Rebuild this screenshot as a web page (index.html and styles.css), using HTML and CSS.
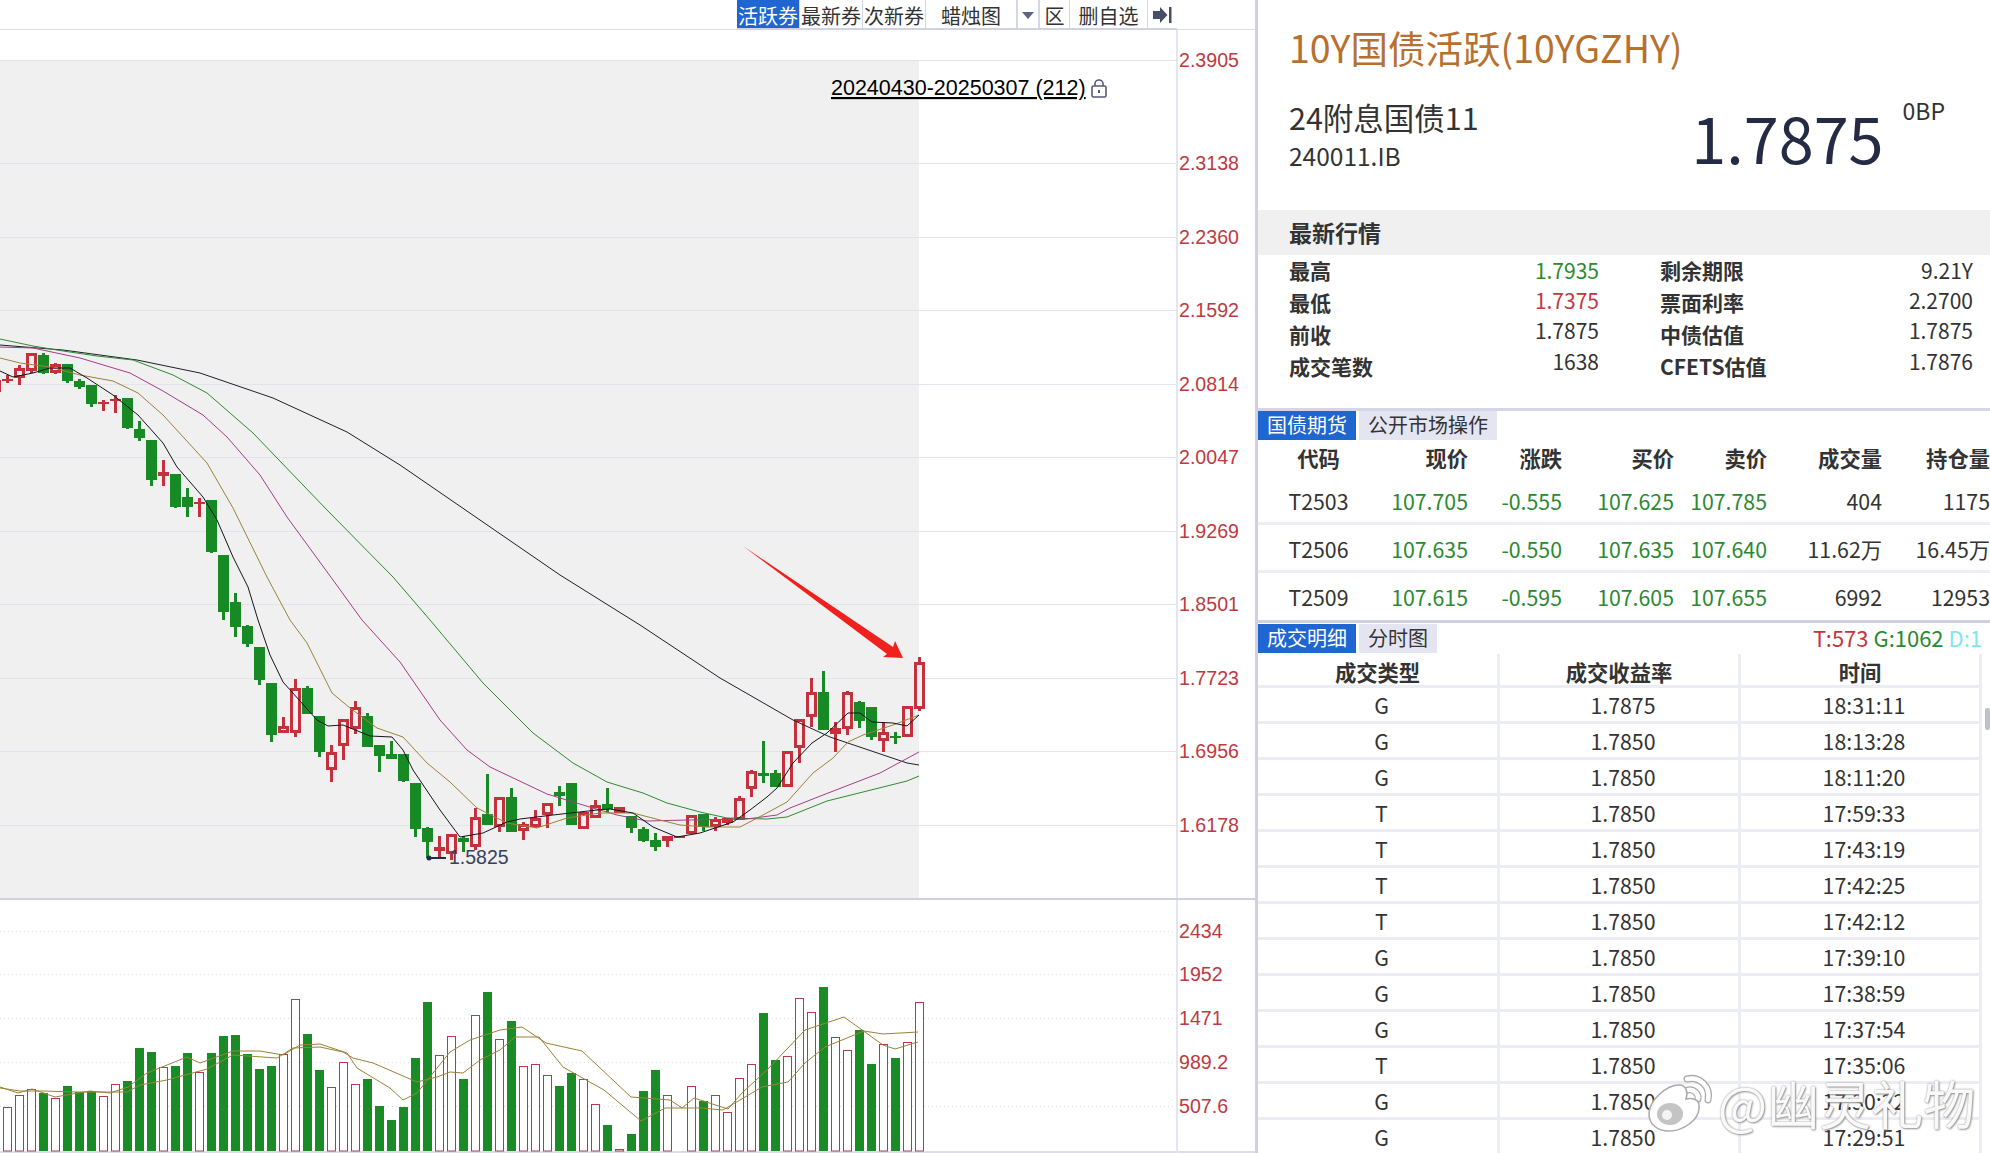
FILE: index.html

```html
<!DOCTYPE html>
<html lang="zh-CN">
<head>
  <meta charset="UTF-8" />
  <title>10Y国债活跃(10YGZHY)</title>
  <link rel="stylesheet" href="styles.css">
</head>
<body>
  <div class="page">
    <div class="left">
      <div class="topbar">
        <div class="tools">
          <a class="tool active" href="#">活跃券</a>
          <a class="tool" href="#">最新券</a>
          <a class="tool" href="#">次新券</a>
          <a class="tool wide" href="#">蜡烛图</a>
          <a class="tool small" href="#"><span class="caret"></span></a>
          <a class="tool mid" href="#">区</a>
          <a class="tool del" href="#">删自选</a>
          <a class="tool mid" href="#">
            <svg width="19" height="16" viewBox="0 0 19 16"><path d="M0 4h7V0l7.500 8L7 16v-4H0zM16 0h2.500v16H16z" fill="#4a4d6a"/></svg>
          </a>
        </div>
      </div>
      <svg id="kline" class="kline" viewBox="0 30 1255 868" width="1255" height="868"></svg>
      <svg id="volume" class="volume" viewBox="0 898 1255 255" width="1255" height="255"></svg>
    </div>

    <div class="right">
      <div class="head">
        <div class="title">10Y国债活跃(10YGZHY)</div>
        <div class="bond">
          <div>
            <div class="bond-name">24附息国债11</div>
            <div class="bond-code">240011.IB</div>
          </div>
          <div class="price-wrap">
            <div class="price">1.7875</div>
            <div class="bp">0BP</div>
          </div>
        </div>
      </div>

      <div class="band">最新行情</div>
      <div class="quote">
        <div class="quote-col">
          <div class="labels">
            <div>最高</div>
            <div>最低</div>
            <div>前收</div>
            <div>成交笔数</div>
          </div>
          <div class="values">
            <div class="green">1.7935</div>
            <div class="red">1.7375</div>
            <div>1.7875</div>
            <div>1638</div>
          </div>
        </div>
        <div class="quote-col second">
          <div class="labels">
            <div>剩余期限</div>
            <div>票面利率</div>
            <div>中债估值</div>
            <div>CFETS估值</div>
          </div>
          <div class="values">
            <div>9.21Y</div>
            <div>2.2700</div>
            <div>1.7875</div>
            <div>1.7876</div>
          </div>
        </div>
      </div>

      <div class="tabs">
        <a class="tab active" href="#">国债期货</a>
        <a class="tab" href="#">公开市场操作</a>
      </div>
      <div class="fut-head">
        <div class="center">代码</div><div>现价</div><div>涨跌</div><div>买价</div><div>卖价</div><div>成交量</div><div>持仓量</div>
      </div>
      <div class="fut-row">
        <div class="center">T2503</div><div class="green">107.705</div><div class="green">-0.555</div><div class="green">107.625</div><div class="green">107.785</div><div>404</div><div>1175</div>
      </div>
      <div class="fut-row">
        <div class="center">T2506</div><div class="green">107.635</div><div class="green">-0.550</div><div class="green">107.635</div><div class="green">107.640</div><div>11.62万</div><div>16.45万</div>
      </div>
      <div class="fut-row last">
        <div class="center">T2509</div><div class="green">107.615</div><div class="green">-0.595</div><div class="green">107.605</div><div class="green">107.655</div><div>6992</div><div>12953</div>
      </div>

      <div class="tabs second-tabs">
        <a class="tab active" href="#">成交明细</a>
        <a class="tab" href="#">分时图</a>
        <div class="counts"><span class="red">T:573</span> <span class="green">G:1062</span> <span class="cyan">D:1</span></div>
      </div>
      <div class="trades">
        <div class="trade-head"><div>成交类型</div><div>成交收益率</div><div>时间</div></div>
        <div class="trade-row"><div>G</div><div>1.7875</div><div>18:31:11</div></div>
        <div class="trade-row"><div>G</div><div>1.7850</div><div>18:13:28</div></div>
        <div class="trade-row"><div>G</div><div>1.7850</div><div>18:11:20</div></div>
        <div class="trade-row"><div>T</div><div>1.7850</div><div>17:59:33</div></div>
        <div class="trade-row"><div>T</div><div>1.7850</div><div>17:43:19</div></div>
        <div class="trade-row"><div>T</div><div>1.7850</div><div>17:42:25</div></div>
        <div class="trade-row"><div>T</div><div>1.7850</div><div>17:42:12</div></div>
        <div class="trade-row"><div>G</div><div>1.7850</div><div>17:39:10</div></div>
        <div class="trade-row"><div>G</div><div>1.7850</div><div>17:38:59</div></div>
        <div class="trade-row"><div>G</div><div>1.7850</div><div>17:37:54</div></div>
        <div class="trade-row"><div>T</div><div>1.7850</div><div>17:35:06</div></div>
        <div class="trade-row"><div>G</div><div>1.7850</div><div>17:30:22</div></div>
        <div class="trade-row"><div>G</div><div>1.7850</div><div>17:29:51</div></div>
        <div class="scroll-thumb"></div>
      </div>
    </div>
  </div>

  <div class="watermark">
    <svg width="70" height="62" viewBox="0 0 70 62">
      <g fill="none" stroke="#a9a9a9" stroke-width="7" stroke-linecap="round">
        <path d="M42 7C54 4 66 14 63 28"/>
        <path d="M43 18C49 17 54 22 53 27"/>
      </g>
      <g fill="none" stroke="#fff" stroke-width="4.500" stroke-linecap="round">
        <path d="M42 7C54 4 66 14 63 28"/>
        <path d="M43 18C49 17 54 22 53 27"/>
      </g>
      <path d="M4 42C4 28 22 13 34 13C42 13 43 21 41 27C50 25 55 29 54 36C54 48 38 59 24 59C12 59 4 52 4 42Z" fill="#fff" fill-opacity=".95" stroke="#a9a9a9" stroke-width="1.500"/>
      <ellipse cx="25" cy="42" rx="13" ry="11" fill="#c4c4c4"/>
      <circle cx="22" cy="43" r="5" fill="#f4f4f4"/>
    </svg>
    <span class="wm-text">@幽灵礼物</span>
  </div>

  <script src="chart.js"></script>
</body>
</html>
```

FILE: styles.css

```css
html, body {
  margin: 0;
  padding: 0;
  height: 100%;
  overflow: hidden;
  background: #ffffff;
}
body {
  font-family: "Noto Sans CJK SC", sans-serif;
  color: #333333;
  font-size: 20px;
}
a {
  text-decoration: none;
  color: inherit;
}
.page {
  display: flex;
  width: 1990px;
  height: 1153px;
}
.left {
  width: 1255px;
  flex: none;
  border-right: 3px solid #cfd1e3;
}
.right {
  flex: 1;
  min-width: 0;
  position: relative;
  overflow: hidden;
}
.topbar {
  height: 29px;
  border-bottom: 1px solid #dcdde9;
  display: flex;
  justify-content: flex-end;
  padding-right: 78px;
}
.tools {
  display: flex;
  height: 28px;
  border-bottom: 2px solid #d0d2e4;
}
.tool {
  width: 62px;
  height: 26px;
  padding-top: 2px;
  text-align: center;
  white-space: nowrap;
  border-right: 1px solid #d6d7e6;
  display: flex;
  align-items: center;
  justify-content: center;
}
.tool.active {
  background: #1f66d0;
  color: #ffffff;
}
.tool.wide { width: 90px; border-right: 2px solid #d6d7e6; }
.tool.small { width: 20px; border-right: 2px solid #d6d7e6; }
.tool.mid { width: 29px; border-right: 1px solid #d6d7e6; }
.tool.del { width: 77px; }
.tool:last-child { border-right: none; }
.caret {
  width: 0;
  height: 0;
  border-left: 6px solid transparent;
  border-right: 6px solid transparent;
  border-top: 7px solid #5f6280;
}
.kline, .volume {
  display: block;
}
.axis, .low, .range {
  font-family: "Liberation Sans", Arial, sans-serif;
}
.axis {
  font-size: 19.6px;
  fill: #c0393f;
}
.low {
  font-size: 19.5px;
  fill: #3a3f5c;
}
.range {
  font-size: 21.5px;
  fill: #000000;
  text-decoration: underline;
  text-decoration-thickness: 2px;
}
.title {
  padding-top: 25px;
  padding-left: 31px;
  line-height: 44px;
  font-size: 37.5px;
  color: #b8702e;
  white-space: nowrap;
}
.head {
  height: 210px;
}
.bond {
  display: flex;
  justify-content: space-between;
  padding-left: 31px;
  padding-right: 45px;
  margin-top: 28px;
}
.bond-name {
  font-size: 30.5px;
  line-height: 40px;
}
.bond-code {
  font-size: 24.5px;
  line-height: 37px;
}
.price-wrap {
  display: flex;
  align-items: flex-start;
}
.price {
  font-size: 63px;
  line-height: 70px;
  margin-top: 5px;
  color: #252b45;
}
.bp {
  font-size: 23px;
  line-height: 30px;
  margin-top: -2px;
  margin-left: 19px;
}
.band {
  height: 45px;
  line-height: 45px;
  background: #f0f0f0;
  padding-left: 31px;
  font-size: 23px;
  font-weight: 700;
}
.quote {
  display: flex;
  padding-left: 31px;
  box-sizing: border-box;
  border-bottom: 3px solid #d4d5e6;
  height: 156px;
}
.quote-col {
  display: flex;
  justify-content: space-between;
  width: 310px;
}
.quote-col.second {
  margin-left: 61px;
  width: 313px;
}
.labels {
  font-weight: 700;
  font-size: 21px;
  line-height: 31.9px;
  white-space: nowrap;
}
.values {
  text-align: right;
  font-size: 21px;
  line-height: 30.2px;
}
.green { color: #2a8a2e; }
.red { color: #c8343c; }
.cyan { color: #7ee8ea; }
.tabs {
  display: flex;
  gap: 3px;
  height: 29px;
  font-size: 20px;
}
.second-tabs {
  border-top: 3px solid #cfd1e3;
  padding-top: 1px;
}
.tab {
  height: 29px;
  line-height: 27px;
  padding: 0 9px;
  background: #e4e5f1;
  white-space: nowrap;
}
.tab.active {
  background: #1f66d0;
  color: #ffffff;
}
.counts {
  margin-left: auto;
  padding-right: 8px;
  line-height: 26px;
  font-size: 22px;
  white-space: nowrap;
}
.fut-head, .fut-row {
  display: grid;
  grid-template-columns: 121px 89px 94px 112px 93px 115px 108px;
  text-align: right;
  white-space: nowrap;
}
.fut-head {
  height: 37px;
  line-height: 36px;
  font-size: 21.3px;
  font-weight: 700;
}
.fut-row {
  box-sizing: border-box;
  height: 48px;
  padding-top: 3px;
  line-height: 41px;
  font-size: 21.3px;
  border-bottom: 3px solid #eeeef5;
}
.fut-row.last {
  height: 47px;
  border-bottom: none;
}
.center {
  text-align: center;
}
.trades {
  position: relative;
  margin-top: 1px;
}
.trade-head, .trade-row {
  display: grid;
  grid-template-columns: 242px 241px 241px;
  width: 724px;
  box-sizing: border-box;
  text-align: center;
  border-bottom: 3px solid #ececf4;
}
.trade-head > div, .trade-row > div {
  border-right: 3px solid #ececf4;
}
.trade-head {
  height: 34px;
  line-height: 35px;
  font-size: 21.3px;
  font-weight: 700;
}
.trade-row {
  height: 36px;
  line-height: 34px;
  font-size: 21.3px;
}
.trade-row > div {
  padding-left: 8px;
}
.scroll-thumb {
  position: absolute;
  right: 0;
  top: 54px;
  width: 5px;
  height: 22px;
  background: #c0c0c8;
  border-radius: 2px;
}
.watermark {
  position: absolute;
  left: 1645px;
  top: 1072px;
  display: flex;
  align-items: center;
  gap: 3px;
}
.wm-text {
  font-size: 52px;
  line-height: 60px;
  color: rgba(255, 255, 255, 0.94);
  text-shadow: 0 0 2px #8e8e8e, 1px 1px 2px #9c9c9c;
  white-space: nowrap;
}
```

FILE: chart.js

```js
// candles: [wick top, body top, body bottom, wick bottom, type]
// g = green filled, h = red hollow, r = red filled
const candles = [
  [375, 379, 381, 383, "r"], [365, 368, 378, 385, "h"], [353, 353, 371, 373, "h"], [353, 355, 373, 374, "g"],
  [363, 364, 373, 374, "h"], [364, 364, 381, 383, "g"], [379, 381, 387, 389, "g"], [385, 385, 404, 407, "g"],
  [400, 402, 404, 411, "r"], [395, 399, 401, 413, "r"], [398, 398, 428, 429, "g"], [421, 429, 438, 441, "g"],
  [440, 440, 480, 486, "g"], [460, 472, 476, 486, "r"], [474, 474, 507, 508, "g"], [488, 497, 507, 517, "g"],
  [498, 502, 504, 517, "r"], [500, 500, 552, 553, "g"], [555, 555, 612, 620, "g"], [593, 602, 627, 637, "g"],
  [625, 626, 644, 647, "g"], [647, 647, 680, 685, "g"], [683, 683, 735, 742, "g"], [717, 726, 733, 733, "h"],
  [679, 688, 733, 737, "h"], [686, 688, 714, 714, "g"], [716, 716, 752, 757, "g"], [745, 752, 770, 782, "h"],
  [719, 719, 746, 760, "h"], [701, 707, 729, 734, "h"], [713, 716, 747, 747, "g"], [745, 745, 756, 772, "g"],
  [741, 754, 759, 759, "g"], [754, 754, 781, 782, "g"], [783, 783, 829, 837, "g"], [827, 828, 842, 858, "g"],
  [836, 847, 851, 857, "r"], [834, 834, 854, 860, "h"], [836, 838, 842, 852, "g"], [808, 817, 847, 850, "h"],
  [774, 814, 825, 825, "g"], [797, 797, 827, 832, "h"], [788, 797, 832, 832, "g"], [822, 824, 831, 840, "h"],
  [810, 818, 827, 828, "h"], [803, 803, 815, 828, "h"], [786, 792, 796, 806, "g"], [783, 783, 825, 825, "g"],
  [812, 812, 829, 829, "h"], [800, 805, 818, 818, "h"], [788, 804, 809, 812, "g"], [807, 807, 813, 813, "r"],
  [816, 816, 828, 833, "g"], [827, 829, 841, 842, "g"], [833, 840, 847, 851, "g"], [836, 836, 841, 847, "h"],
  [836, 836, 838, 838, "r"], [815, 815, 834, 834, "h"], [814, 814, 827, 831, "g"], [817, 819, 827, 831, "h"],
  [818, 818, 823, 825, "r"], [796, 798, 820, 820, "h"], [770, 771, 789, 797, "h"], [741, 773, 776, 783, "g"],
  [770, 773, 787, 787, "g"], [751, 751, 787, 787, "h"], [719, 719, 748, 763, "h"], [678, 692, 717, 727, "h"],
  [671, 692, 730, 730, "g"], [722, 728, 734, 752, "r"], [691, 692, 729, 735, "h"], [701, 702, 721, 728, "g"],
  [707, 707, 737, 740, "g"], [722, 732, 741, 752, "h"], [732, 736, 738, 744, "g"], [706, 706, 737, 737, "h"],
  [657, 662, 709, 711, "h"]
];

const ma5 = [[0,371],[13,377],[33,373],[50,368],[70,368],[87,378],[113,395],[138,415],[163,443],[177,467],[203,497],[217,520],[233,557],[248,587],[258,620],[270,655],[283,682],[317,720],[328,726],[343,725],[370,736],[392,737],[403,750],[413,770],[440,810],[460,837],[483,833],[507,822],[520,819],[553,815],[597,810],[610,809],[633,813],[653,827],[677,837],[700,833],[733,822],[750,810],[767,797],[777,788],[793,763],[812,743],[827,733],[848,713],[860,713],[872,722],[893,723],[907,726],[919,715]];
const ma10 = [[0,358],[20,363],[50,367],[80,375],[113,381],[138,393],[163,415],[207,463],[233,508],[267,577],[290,620],[307,643],[332,693],[350,708],[377,728],[403,737],[427,763],[450,782],[477,808],[507,823],[537,828],[567,818],[600,813],[633,813],[660,820],[680,825],[707,827],[740,827],[763,815],[787,802],[813,773],[833,758],[848,742],[863,735],[893,725],[919,715]];
const ma20 = [[0,347],[33,348],[80,358],[130,373],[163,391],[203,415],[227,437],[260,475],[287,517],[333,580],[362,620],[400,662],[440,720],[467,750],[490,767],[547,794],[593,808],[617,815],[647,821],[687,820],[747,819],[777,815],[790,808],[823,795],[880,773],[919,752]];
const ma30 = [[0,339],[33,346],[63,351],[97,356],[133,360],[173,375],[207,393],[253,433],[327,510],[393,577],[430,620],[483,683],[533,733],[573,763],[607,782],[643,793],[667,803],[700,812],[727,818],[767,819],[787,817],[827,801],[863,792],[907,781],[919,776]];
const ma60 = [[0,345],[63,350],[137,360],[200,373],[273,398],[347,432],[400,465],[480,520],[560,575],[640,625],[720,678],[793,720],[830,737],[907,763],[919,765]];

const volMa1 = [[0,1087],[18,1093],[32,1089],[55,1097],[78,1093],[90,1091],[110,1093],[128,1087],[147,1073],[187,1057],[200,1063],[233,1051],[260,1051],[283,1055],[300,1045],[320,1044],[347,1053],[357,1068],[390,1088],[403,1100],[417,1093],[450,1052],[470,1040],[500,1030],[522,1027],[546,1043],[582,1051],[631,1097],[670,1100],[682,1108],[694,1098],[728,1109],[742,1093],[767,1070],[805,1030],[844,1017],[883,1045],[895,1049],[918,1042]];
const volMa2 = [[0,1088],[20,1091],[43,1091],[77,1092],[127,1092],[140,1085],[167,1080],[207,1069],[233,1055],[277,1058],[293,1048],[320,1047],[343,1052],[353,1058],[373,1063],[417,1082],[437,1077],[450,1072],[463,1073],[480,1060],[500,1050],[515,1037],[539,1037],[563,1067],[604,1090],[641,1121],[665,1108],[701,1108],[723,1110],[762,1087],[788,1082],[805,1063],[825,1047],[864,1031],[883,1034],[918,1032]];

// volume bar tops, page y
const vols = [1107,1095,1089,1093,1098,1086,1092,1091,1096,1084,1081,1048,1052,1067,1066,1053,1072,1053,1036,1035,1054,1069,1066,1054,999,1034,1070,1087,1062,1084,1079,1106,1120,1107,1058,1002,1055,1036,1079,1015,992,1039,1021,1066,1064,1075,1086,1073,1079,1104,1125,1149,1134,1091,1070,1095,1151,1086,1101,1095,1112,1078,1064,1013,1060,1056,998,1012,987,1037,1050,1030,1064,1044,1058,1042,1002];

const RED = "#c4303c";
const GREEN = "#178a26";

function centerX(i) {
  return 7.5 + 12 * i;
}

function polyline(points, color) {
  const pts = points.map(p => p.join(",")).join(" ");
  return `<polyline points="${pts}" fill="none" stroke="${color}" stroke-width="1"/>`;
}

function drawCandle(c, i) {
  const x = centerX(i);
  const color = c[4] === "g" ? GREEN : RED;
  let s = `<rect x="${x - 1.5}" y="${c[0]}" width="3" height="${c[3] - c[0]}" fill="${color}"/>`;
  if (c[4] === "h") {
    s += `<rect x="${x - 4}" y="${c[1] + 1.5}" width="8" height="${Math.max(c[2] - c[1] - 3, 1)}" fill="#f8eef0" stroke="${color}" stroke-width="3"/>`;
  } else {
    s += `<rect x="${x - 5.5}" y="${c[1]}" width="11" height="${c[2] - c[1]}" fill="${color}"/>`;
  }
  return s;
}

function drawKline() {
  let s = "";
  // plot background
  s += `<rect x="0" y="60" width="919" height="838" fill="#f0f0f0"/>`;
  const axis = [
    [60, "2.3905"], [163, "2.3138"], [237, "2.2360"], [310, "2.1592"], [384, "2.0814"], [457, "2.0047"],
    [531, "1.9269"], [604, "1.8501"], [678, "1.7723"], [751, "1.6956"], [825, "1.6178"]
  ];
  axis.forEach(a => {
    s += `<rect x="0" y="${a[0]}" width="1177" height="1" fill="#e3e3ec"/>`;
    s += `<text class="axis" x="1179" y="${a[0] + 7}">${a[1]}</text>`;
  });
  s += `<rect x="1176" y="30" width="2" height="868" fill="#e4e5f0"/>`;
  s += `<rect x="-2" y="380" width="3" height="12" fill="${RED}"/>`;
  candles.forEach((c, i) => { s += drawCandle(c, i); });
  s += polyline(ma60, "#1f1f28");
  s += polyline(ma30, "#2f8a2f");
  s += polyline(ma20, "#a53c86");
  s += polyline(ma10, "#9a8238");
  s += polyline(ma5, "#14141f");

  // low marker
  s += `<circle cx="429" cy="858" r="2.500" fill="#252b45"/><rect x="429" y="857" width="17" height="2" fill="#252b45"/>`;
  s += `<text class="low" x="449" y="864">1.5825</text>`;

  // date range and lock
  s += `<text class="range" x="831" y="95">20240430-20250307 (212)</text>`;
  s += `<path d="M1095 86v-2.500a4 3.500 0 0 1 8 0v2.500" fill="none" stroke="#55587a" stroke-width="1.600"/>`;
  s += `<rect x="1092" y="86" width="14" height="11" rx="1.500" fill="none" stroke="#55587a" stroke-width="1.600"/>`;
  s += `<rect x="1098" y="90" width="2" height="3" fill="#55587a"/>`;

  // red arrow
  s += `<polygon points="743,546 893,647 895,641 903,658 883,657 887,654" fill="#f0201c"/>`;
  document.getElementById("kline").innerHTML = s;
}

function drawVolume() {
  let s = "";
  s += `<rect x="0" y="898" width="1255" height="2" fill="#cfd1e3"/>`;
  s += `<rect x="0" y="1151" width="1255" height="2" fill="#dcdde9"/>`;
  const axis = [[931, "2434"], [974, "1952"], [1018, "1471"], [1062, "989.2"], [1106, "507.6"]];
  axis.forEach(a => {
    s += `<line x1="0" y1="${a[0] + 0.5}" x2="1177" y2="${a[0] + 0.5}" stroke="#dddde4" stroke-dasharray="1 3"/>`;
    s += `<text class="axis" x="1179" y="${a[0] + 7}">${a[1]}</text>`;
  });
  s += `<rect x="1176" y="900" width="2" height="253" fill="#e4e5f0"/>`;
  vols.forEach((top, i) => {
    const x = centerX(i);
    if (candles[i][4] === "g") {
      s += `<rect x="${x - 4.5}" y="${top}" width="9" height="${1151 - top}" fill="#1a8c26"/>`;
    } else {
      s += `<rect x="${x - 4}" y="${top + 0.5}" width="8" height="${1150.5 - top}" fill="#fff" stroke="#b03a50"/>`;
    }
  });
  s += polyline(volMa1, "#9a8238");
  s += polyline(volMa2, "#9a8238");
  document.getElementById("volume").innerHTML = s;
}

drawKline();
drawVolume();
```
